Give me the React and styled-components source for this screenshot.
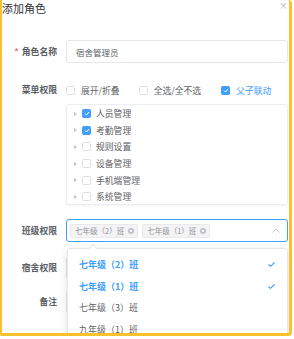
import React from 'react';
import styled, { createGlobalStyle } from 'styled-components';

const Global = createGlobalStyle`
  html, body { margin: 0; padding: 0; background: #fff; }
  body { font-family: "Noto Sans CJK SC", "Noto Sans", sans-serif; }
  * { box-sizing: border-box; }
`;

const Frame = styled.div`
  position: relative;
  width: 292px;
  height: 336px;
  border-style: solid;
  border-color: #f8c12d;
  border-width: 0 3px 3px 2px;
  border-radius: 0 4px 4px 2px;
  overflow: hidden;
  background: #fff;
`;

const Header = styled.div`
  display: flex;
  justify-content: space-between;
  align-items: center;
  height: 16px;
`;

const Title = styled.div`
  font-size: 11px;
  line-height: 16px;
  color: #303133;
`;

const Close = styled.div`
  font-size: 9px;
  line-height: 9px;
  color: #a8abb2;
  margin: -6px 1px 0 0;
`;

const Form = styled.div`
  display: flex;
  flex-direction: column;
  padding-right: 1px;
`;

const Item = styled.div`
  display: grid;
  grid-template-columns: 55px 1fr;
  column-gap: 9px;
  align-items: ${p => (p.$top ? 'start' : 'center')};
  margin-top: ${p => p.$mt}px;
`;

const Label = styled.div`
  text-align: right;
  font-size: 8.8px;
  line-height: 14px;
  color: #5a5d63;
  font-weight: 700;
`;

const Star = styled.span`
  color: #f56c6c;
  margin-right: 3px;
`;

const Input = styled.div`
  height: 23px;
  border: 1px solid #e4e7ed;
  border-radius: 3px;
  padding-left: 9px;
  display: flex;
  align-items: center;
  font-size: 8.5px;
  color: #606266;
`;

const CheckRow = styled.div`
  display: flex;
  align-items: center;
  height: 14px;
`;

const CheckLabel = styled.label`
  display: flex;
  align-items: center;
  gap: 6px;
  font-size: 8.8px;
  color: ${p => (p.$on ? '#409eff' : '#606266')};
  margin-right: ${p => p.$mr || 0}px;
`;

const Box = styled.span`
  width: 9px;
  height: 9px;
  border-radius: 1.5px;
  border: 1px solid ${p => (p.$on ? '#409eff' : '#dcdfe6')};
  background: ${p => (p.$on ? '#409eff' : '#fff')};
  display: inline-flex;
  align-items: center;
  justify-content: center;
  flex-shrink: 0;
`;

const Tree = styled.div`
  margin-top: 7px;
  height: 101px;
  border: 1px solid #ebeef5;
  border-radius: 3px;
  box-shadow: 0 1px 3px rgba(0, 0, 0, 0.05);
  padding-top: 0.5px;
`;

const Node = styled.div`
  display: flex;
  align-items: center;
  height: 16.6px;
  padding-left: 7px;
  font-size: 8.8px;
  color: #606266;
`;

const Caret = styled.span`
  width: 0;
  height: 0;
  border-top: 2.5px solid transparent;
  border-bottom: 2.5px solid transparent;
  border-left: 3px solid #c0c4cc;
  margin-right: 5px;
`;

const NodeText = styled.span`
  margin-left: 5px;
`;

const SelectWrap = styled.div`
  position: relative;
`;

const Select = styled.div`
  height: 23px;
  border: 1px solid #409eff;
  border-radius: 3px;
  display: flex;
  align-items: center;
  padding: 0 0 0 3px;
  gap: 4px;
`;

const Tag = styled.span`
  display: inline-flex;
  align-items: center;
  height: 14px;
  padding: 0 3px 0 4px;
  gap: 4px;
  background: #f4f4f5;
  border: 1px solid #e9e9eb;
  border-radius: 2px;
  font-size: 7.5px;
  color: #909399;
`;

const TagClose = styled.span`
  width: 6px;
  height: 6px;
  border-radius: 50%;
  background: #c0c4cc;
  display: inline-flex;
  align-items: center;
  justify-content: center;
`;

const Arrow = styled.span`
  margin-left: auto;
  margin-right: 7px;
  display: flex;
`;

const Dropdown = styled.div`
  position: absolute;
  top: calc(100% + 6px);
  left: 1px;
  right: 0;
  background: #fff;
  border: 1px solid #e4e7ed;
  border-radius: 3px;
  box-shadow: 0 2px 8px rgba(0, 0, 0, 0.12);
  padding-top: 5px;
  z-index: 5;
`;

const Pointer = styled.span`
  position: absolute;
  top: -4px;
  left: 22px;
  width: 6px;
  height: 6px;
  background: #fff;
  border-left: 1px solid #e4e7ed;
  border-top: 1px solid #e4e7ed;
  transform: rotate(45deg);
`;

const Option = styled.div`
  display: flex;
  align-items: center;
  justify-content: space-between;
  height: 21.5px;
  padding: 0 12px 0 11px;
  font-size: 9px;
  color: ${p => (p.$on ? '#409eff' : '#606266')};
  font-weight: ${p => (p.$on ? 700 : 400)};
`;

const Check = () => (
  <svg width="6" height="5" viewBox="0 0 6 5">
    <path d="M1 2.5 L2.5 4 L5 1" fill="none" stroke="#fff" strokeWidth="1" />
  </svg>
);

const CheckBox = ({ on }) => <Box $on={on}>{on && <Check />}</Box>;

const tree = [
  ['人员管理', true],
  ['考勤管理', true],
  ['规则设置', false],
  ['设备管理', false],
  ['手机端管理', false],
  ['系统管理', false],
];

const options = [
  ['七年级（2）班', true],
  ['七年级（1）班', true],
  ['七年级（3）班', false],
  ['九年级（1）班', false],
];

const TagItem = ({ text }) => (
  <Tag>
    {text}
    <TagClose>
      <svg width="4" height="4" viewBox="0 0 4 4">
        <path d="M1 1 L3 3 M3 1 L1 3" stroke="#fff" strokeWidth="0.8" />
      </svg>
    </TagClose>
  </Tag>
);

export default function App() {
  return (
    <>
      <Global />
      <Frame>
        <Header>
          <Title>添加角色</Title>
          <Close>×</Close>
        </Header>
        <Form>
          <Item $mt={24}>
            <Label><Star>*</Star>角色名称</Label>
            <Input>宿舍管理员</Input>
          </Item>
          <Item $mt={20} $top>
            <Label>菜单权限</Label>
            <div>
              <CheckRow>
                <CheckLabel $mr={19}><CheckBox />展开/折叠</CheckLabel>
                <CheckLabel $mr={20}><CheckBox />全选/全不选</CheckLabel>
                <CheckLabel $on><CheckBox on />父子联动</CheckLabel>
              </CheckRow>
              <Tree>
                {tree.map(([name, on]) => (
                  <Node key={name}>
                    <Caret />
                    <CheckBox on={on} />
                    <NodeText>{name}</NodeText>
                  </Node>
                ))}
              </Tree>
            </div>
          </Item>
          <Item $mt={14}>
            <Label>班级权限</Label>
            <SelectWrap>
              <Select>
                <TagItem text="七年级（2）班" />
                <TagItem text="七年级（1）班" />
                <Arrow>
                  <svg width="8" height="5" viewBox="0 0 8 5">
                    <path d="M0.5 4.5 L4 1 L7.5 4.5" fill="none" stroke="#c0c4cc" strokeWidth="0.9" />
                  </svg>
                </Arrow>
              </Select>
              <Dropdown>
                <Pointer />
                {options.map(([name, on]) => (
                  <Option key={name} $on={on}>
                    {name}
                    {on && (
                      <svg width="7" height="5" viewBox="0 0 7 5">
                        <path d="M0.5 2.5 L2.5 4.3 L6.5 0.5" fill="none" stroke="#409eff" strokeWidth="1.1" />
                      </svg>
                    )}
                  </Option>
                ))}
              </Dropdown>
            </SelectWrap>
          </Item>
          <Item $mt={14}>
            <Label>宿舍权限</Label>
            <Input />
          </Item>
          <Item $mt={11}>
            <Label>备注</Label>
            <Input />
          </Item>
        </Form>
      </Frame>
    </>
  );
}
